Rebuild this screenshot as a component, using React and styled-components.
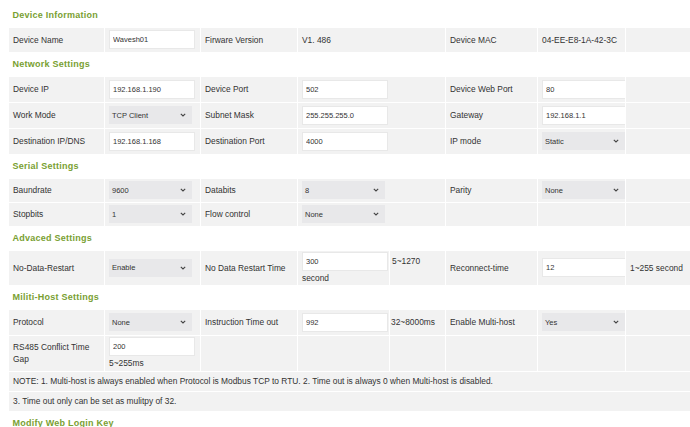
import React from 'react';
import styled, { createGlobalStyle } from 'styled-components';

const GlobalStyle = createGlobalStyle`
  html, body {
    margin: 0;
    padding: 0;
    background: #fff;
    overflow: hidden;
  }
  body {
    font-family: "Liberation Sans", Arial, sans-serif;
    color: #333;
  }
`;

const Page = styled.div`
  padding: 3px 0 0 8px;
`;

const Table = styled.table`
  width: 682px;
  table-layout: fixed;
  border-collapse: collapse;
  font-size: 8.4px;
`;

const Col = styled.col`
  width: ${(p) => p.$w}px;
`;

const Row = styled.tr`
  height: ${(p) => p.$h || 26}px;
`;

const SectionTitle = styled.td`
  padding: 0 4px;
  background: #fff;
  color: #79a032;
  font-size: 9px;
  font-weight: bold;
  letter-spacing: 0.25px;
  vertical-align: middle;
`;

const Cell = styled.td`
  background: #f2f2f2;
  border: 1px solid #fff;
  padding: ${(p) => p.$pad || '0 4px'};
  vertical-align: ${(p) => (p.$top ? 'top' : 'middle')};
  line-height: 12px;
  white-space: ${(p) => (p.$nowrap ? 'nowrap' : 'normal')};
  overflow: hidden;
`;

const TextBox = styled.input`
  box-sizing: border-box;
  display: block;
  width: 86px;
  height: 19px;
  margin: 0;
  padding: 0 3px;
  border: 1px solid #e8e8e8;
  background: #fff;
  color: #333;
  font: 7.5px "Liberation Sans", Arial, sans-serif;
  outline: none;
`;

const SelectBox = styled.div`
  box-sizing: border-box;
  width: 83px;
  height: 18px;
  padding: 0 6px 0 3px;
  display: flex;
  align-items: center;
  justify-content: space-between;
  background: #e8e8ea;
  color: #333;
  font: 7.5px "Liberation Sans", Arial, sans-serif;
`;

const Stack = styled.div`
  display: flex;
  flex-direction: column;
  gap: 1px;
`;

const Hint = styled.span`
  display: block;
`;

const Chevron = () => (
  <svg width="6" height="4" viewBox="0 0 6 4">
    <path d="M0.8 0.8 L3 3 L5.2 0.8" fill="none" stroke="#444" strokeWidth="1.1" />
  </svg>
);

const Select = ({ value }) => (
  <SelectBox>
    <span>{value}</span>
    <Chevron />
  </SelectBox>
);

const Input = ({ value }) => <TextBox type="text" defaultValue={value} />;

const Section = ({ title }) => (
  <Row $h={24}>
    <SectionTitle colSpan={8}>{title}</SectionTitle>
  </Row>
);

const Empty = ({ span }) => <Cell colSpan={span} />;

const App = () => (
  <Page>
    <GlobalStyle />
    <Table>
      <colgroup>
        <Col $w={96} />
        <Col $w={96} />
        <Col $w={97} />
        <Col $w={92} />
        <Col $w={56} />
        <Col $w={92} />
        <Col $w={88} />
        <Col $w={65} />
      </colgroup>
      <tbody>
        <Section title="Device Information" />
        <Row $h={25}>
          <Cell>Device Name</Cell>
          <Cell><Input value="Wavesh01" /></Cell>
          <Cell>Firware Version</Cell>
          <Cell colSpan={2}>V1. 486</Cell>
          <Cell>Device MAC</Cell>
          <Cell $nowrap>04-EE-E8-1A-42-3C</Cell>
          <Empty />
        </Row>

        <Section title="Network Settings" />
        <Row>
          <Cell>Device IP</Cell>
          <Cell><Input value="192.168.1.190" /></Cell>
          <Cell>Device Port</Cell>
          <Cell colSpan={2}><Input value="502" /></Cell>
          <Cell>Device Web Port</Cell>
          <Cell><Input value="80" /></Cell>
          <Empty />
        </Row>
        <Row>
          <Cell>Work Mode</Cell>
          <Cell><Select value="TCP Client" /></Cell>
          <Cell>Subnet Mask</Cell>
          <Cell colSpan={2}><Input value="255.255.255.0" /></Cell>
          <Cell>Gateway</Cell>
          <Cell><Input value="192.168.1.1" /></Cell>
          <Empty />
        </Row>
        <Row>
          <Cell>Destination IP/DNS</Cell>
          <Cell><Input value="192.168.1.168" /></Cell>
          <Cell>Destination Port</Cell>
          <Cell colSpan={2}><Input value="4000" /></Cell>
          <Cell>IP mode</Cell>
          <Cell><Select value="Static" /></Cell>
          <Empty />
        </Row>

        <Section title="Serial Settings" />
        <Row $h={24}>
          <Cell>Baundrate</Cell>
          <Cell><Select value="9600" /></Cell>
          <Cell>Databits</Cell>
          <Cell colSpan={2}><Select value="8" /></Cell>
          <Cell>Parity</Cell>
          <Cell><Select value="None" /></Cell>
          <Empty />
        </Row>
        <Row $h={24}>
          <Cell>Stopbits</Cell>
          <Cell><Select value="1" /></Cell>
          <Cell>Flow control</Cell>
          <Cell colSpan={2}><Select value="None" /></Cell>
          <Empty />
          <Empty />
          <Empty />
        </Row>

        <Section title="Advaced Settings" />
        <Row $h={35}>
          <Cell>No-Data-Restart</Cell>
          <Cell><Select value="Enable" /></Cell>
          <Cell $nowrap>No Data Restart Time</Cell>
          <Cell>
            <Stack>
              <Input value="300" />
              <Hint>second</Hint>
            </Stack>
          </Cell>
          <Cell $top $nowrap $pad="4px 2px 0">5~1270</Cell>
          <Cell>Reconnect-time</Cell>
          <Cell><Input value="12" /></Cell>
          <Cell $nowrap>1~255 second</Cell>
        </Row>

        <Section title="Militi-Host Settings" />
        <Row>
          <Cell>Protocol</Cell>
          <Cell><Select value="None" /></Cell>
          <Cell $nowrap>Instruction Time out</Cell>
          <Cell><Input value="992" /></Cell>
          <Cell $nowrap $pad="0 1px">32~8000ms</Cell>
          <Cell $nowrap>Enable Multi-host</Cell>
          <Cell><Select value="Yes" /></Cell>
          <Empty />
        </Row>
        <Row $h={36}>
          <Cell>RS485 Conflict Time Gap</Cell>
          <Cell>
            <Stack>
              <Input value="200" />
              <Hint>5~255ms</Hint>
            </Stack>
          </Cell>
          <Empty />
          <Empty />
          <Empty />
          <Empty />
          <Empty />
          <Empty />
        </Row>
        <Row $h={20}>
          <Cell colSpan={8} $nowrap>
            NOTE: 1. Multi-host is always enabled when Protocol is Modbus TCP to RTU. 2. Time out is always 0 when Multi-host is disabled.
          </Cell>
        </Row>
        <Row $h={20}>
          <Cell colSpan={8}>3. Time out only can be set as mulitpy of 32.</Cell>
        </Row>

        <Section title="Modify Web Login Key" />
      </tbody>
    </Table>
  </Page>
);

export default App;
